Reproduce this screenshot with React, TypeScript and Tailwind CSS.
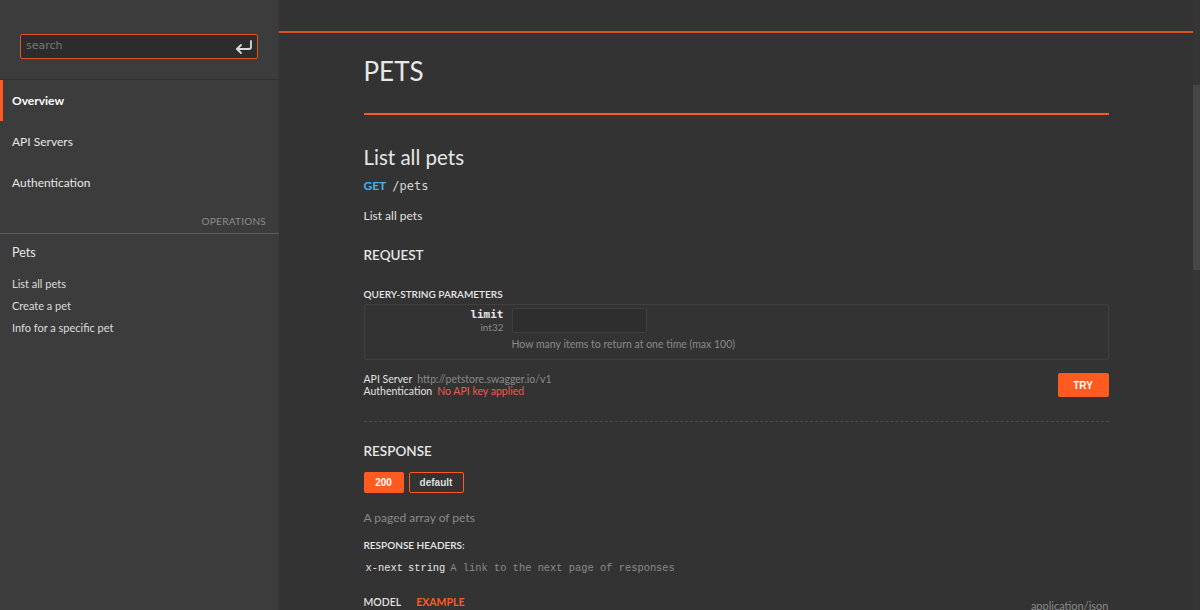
import React from 'react';

const sans = { fontFamily: 'Lato, "Noto Sans", sans-serif' };

const EnterIcon = () => (
    <svg width="20" height="16" viewBox="0 0 20 16" fill="none" stroke="#d8d8d8" strokeWidth="1.8" strokeLinecap="round" strokeLinejoin="round">
        <path d="M17 2v6a2 2 0 0 1-2 2H3" />
        <path d="M7 6l-4 4 4 4" />
    </svg>
);

const Sidebar = () => (
    <aside className="w-[279px] shrink-0 h-full bg-[#3c3c3c] flex flex-col text-[#e6e6e6]">
        <div className="h-[80px] border-b border-[#333333] px-[20px] pt-[34px]">
            <div className="h-[25px] w-[238px] flex items-center justify-between bg-[#2c2c2c] border border-[#e2541d] rounded-[2px] pl-[5px] pr-[3px]">
                <span className="text-[11px] text-[#777777] font-['DejaVu_Sans',sans-serif]">search</span>
                <EnterIcon />
            </div>
        </div>
        <div className="h-[41px] pt-[1px] flex items-center border-l-[3px] border-[#ff5a1f] pl-[9px] text-[12px] font-bold text-white">Overview</div>
        <div className="h-[41px] flex items-center pl-[12px] text-[12px]">API Servers</div>
        <div className="h-[41px] flex items-center pl-[12px] text-[12px]">Authentication</div>
        <div className="h-[31px] border-b border-[#5a5a5a] flex items-end justify-end pb-[4px] pr-[13px] text-[10px] text-[#8c8c8c] tracking-wide">OPERATIONS</div>
        <div className="h-[39px] flex items-center pl-[12px] text-[12.5px]">Pets</div>
        <div className="flex flex-col pl-[12px] text-[11px] text-[#dcdcdc]">
            <div className="h-[22px] flex items-center">List all pets</div>
            <div className="h-[22px] flex items-center">Create a pet</div>
            <div className="h-[22px] flex items-center">Info for a specific pet</div>
        </div>
    </aside>
);

const Main = () => (
    <main className="flex-1 h-full bg-[#333333] flex overflow-hidden">
        <div className="flex-1 flex flex-col">
            <div className="h-[33px] border-b-2 border-[#d9521c] shrink-0" />
            <div className="w-[745px] mx-auto flex flex-col text-[#e0e0e0]">
                <h1 className="h-[82px] pt-[21px] text-[26px] leading-[34px] text-[#e8e8e8] font-['Liberation_Sans_Narrow',Lato,sans-serif] border-b-2 border-[#ff5a1f]">PETS</h1>
                <h2 className="mt-[30px] text-[20.5px] leading-[24px] text-[#e6e6e6]">List all pets</h2>
                <div className="mt-[8px] flex items-center gap-[6px] h-[18px]">
                    <span className="text-[12px] font-bold text-[#3fb2f2]">GET</span>
                    <span className="text-[12px] text-[#d6d6d6] font-['DejaVu_Sans_Mono',monospace]">/pets</span>
                </div>
                <div className="mt-[13px] text-[12px] leading-[16px] text-[#e0e0e0]">List all pets</div>
                <div className="mt-[22px] text-[13.5px] leading-[18px] font-semibold text-[#e6e6e6]">REQUEST</div>
                <div className="mt-[23px] text-[10px] leading-[14px] font-semibold text-[#e6e6e6]">QUERY-STRING PARAMETERS</div>
                <div className="mt-[3px] h-[56px] border border-[#404040] rounded-[2px] flex pt-[3px]">
                    <div className="w-[147px] flex flex-col items-end pr-[8px]">
                        <span className="text-[11px] leading-[13px] font-bold text-[#e6e6e6] font-['DejaVu_Sans_Mono',monospace]">limit</span>
                        <span className="text-[10px] leading-[13px] text-[#8a8a8a]">int32</span>
                    </div>
                    <div className="flex flex-col">
                        <div className="w-[135px] h-[25px] bg-[#2e2e2e] border border-[#3f3f3f] rounded-[2px]" />
                        <span className="mt-[5px] text-[10.5px] leading-[13px] text-[#8a8a8a]">How many items to return at one time (max 100)</span>
                    </div>
                </div>
                <div className="mt-[13px] flex items-center justify-between">
                    <div className="flex flex-col text-[10.5px] leading-[12px]">
                        <div className="flex gap-[5px]"><span className="text-[#e0e0e0]">API Server</span><span className="text-[#8a8a8a]">http://petstore.swagger.io/v1</span></div>
                        <div className="flex gap-[5px]"><span className="text-[#e0e0e0]">Authentication</span><span className="text-[#f0584f]">No API key applied</span></div>
                    </div>
                    <button className="w-[51px] h-[24px] bg-[#ff5a1f] text-white text-[10px] font-bold rounded-[2px] font-['Liberation_Sans',sans-serif]">TRY</button>
                </div>
                <div className="mt-[24px] border-t border-dashed border-[#4a4a4a]" />
                <div className="mt-[20px] text-[13.5px] leading-[18px] font-semibold text-[#e6e6e6]">RESPONSE</div>
                <div className="mt-[12px] flex gap-[5px]">
                    <span className="w-[40px] h-[21px] flex items-center justify-center bg-[#ff5a1f] text-white text-[10px] font-bold rounded-[2px] font-['Liberation_Sans',sans-serif]">200</span>
                    <span className="w-[55px] h-[21px] flex items-center justify-center border border-[#ff5a1f] text-[#dedede] text-[10px] font-bold rounded-[2px] font-['Liberation_Sans',sans-serif]">default</span>
                </div>
                <div className="mt-[17px] text-[12px] leading-[16px] text-[#8a8a8a]">A paged array of pets</div>
                <div className="mt-[12px] text-[10px] leading-[14px] font-semibold text-[#e6e6e6]">RESPONSE HEADERS:</div>
                <div className="mt-[9px] flex items-center gap-[5px] pl-[2px] h-[16px] text-[10.4px] font-['Liberation_Mono',monospace]">
                    <span className="text-[#e6e6e6]">x-next</span>
                    <span className="text-[#e6e6e6]">string</span>
                    <span className="text-[#8a8a8a]">A link to the next page of responses</span>
                </div>
                <div className="mt-[18px] flex justify-between items-end">
                    <div className="flex gap-[15px] text-[10.5px] leading-[14px] font-semibold">
                        <span className="text-[#e0e0e0]">MODEL</span>
                        <span className="text-[#ff5a1f] font-bold">EXAMPLE</span>
                    </div>
                    <span className="text-[11px] leading-[12px] text-[#8a8a8a] translate-y-[3px]">application/json</span>
                </div>
            </div>
        </div>
        <div className="w-[7px] h-full bg-[#363636] flex flex-col">
            <div className="mt-[85px] h-[185px] bg-[#464646]" />
        </div>
    </main>
);

const App: React.FC = () => (
    <div className="w-[1200px] h-[610px] flex overflow-hidden" style={sans}>
        <Sidebar />
        <Main />
    </div>
);

export default App;
